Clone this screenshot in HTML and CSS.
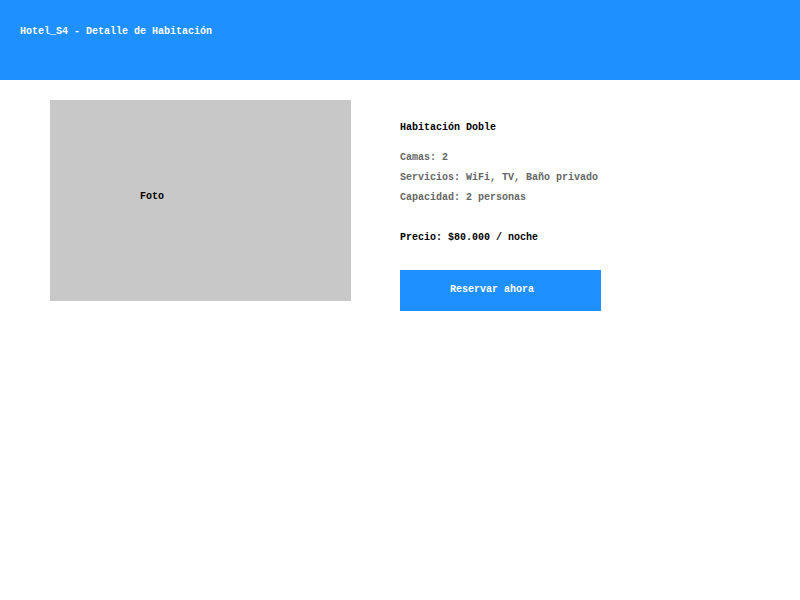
FILE: index.html
```html
<!DOCTYPE html>
<html lang="es">
<head>
<meta charset="utf-8">
<title>Hotel_S4 - Detalle de Habitación</title>
<link rel="stylesheet" href="styles.css">
</head>
<body>
<header class="topbar">
  <h1 class="title">Hotel_S4 - Detalle de Habitación</h1>
</header>
<main class="detail">
  <div class="photo"><span class="photo-label">Foto</span></div>
  <section class="info">
    <h2 class="room-name">Habitación Doble</h2>
    <ul class="features">
      <li>Camas: 2</li>
      <li>Servicios: WiFi, TV, Baño privado</li>
      <li>Capacidad: 2 personas</li>
    </ul>
    <p class="price">Precio: $80.000 / noche</p>
    <button class="book" type="button">Reservar ahora</button>
  </section>
</main>
</body>
</html>
```
FILE: styles.css
```css
* { box-sizing: border-box; }
html, body { margin: 0; padding: 0; background: #ffffff; }
body {
  font-family: "Liberation Mono", "DejaVu Sans Mono", monospace;
  font-size: 10px;
  font-weight: bold;
  color: #000;
}
.topbar {
  height: 80px;
  background: #1e90ff;
  padding: 22px 20px 0;
}
.title {
  margin: 0;
  font-size: 10px;
  line-height: 20px;
  color: #fff;
  font-weight: bold;
}
.detail {
  display: flex;
  gap: 49px;
  padding: 20px 50px;
}
.photo {
  width: 301px;
  height: 201px;
  background: #c8c8c8;
  display: flex;
  align-items: center;
  padding-left: 90px;
  padding-bottom: 8px;
}
.photo-label { color: #000; }
.info { padding-top: 22px; }
.room-name {
  margin: 0;
  font-size: 10px;
  line-height: 12px;
}
.features {
  list-style: none;
  margin: 14px 0 0;
  padding: 0;
  color: #666;
  line-height: 20px;
}
.price {
  margin: 20px 0 0;
  line-height: 20px;
}
.book {
  display: block;
  margin-top: 22px;
  width: 201px;
  height: 41px;
  border: 0;
  background: #1e90ff;
  color: #fff;
  font: inherit;
  text-align: left;
  padding: 0 0 2px 50px;
  cursor: pointer;
}
```
